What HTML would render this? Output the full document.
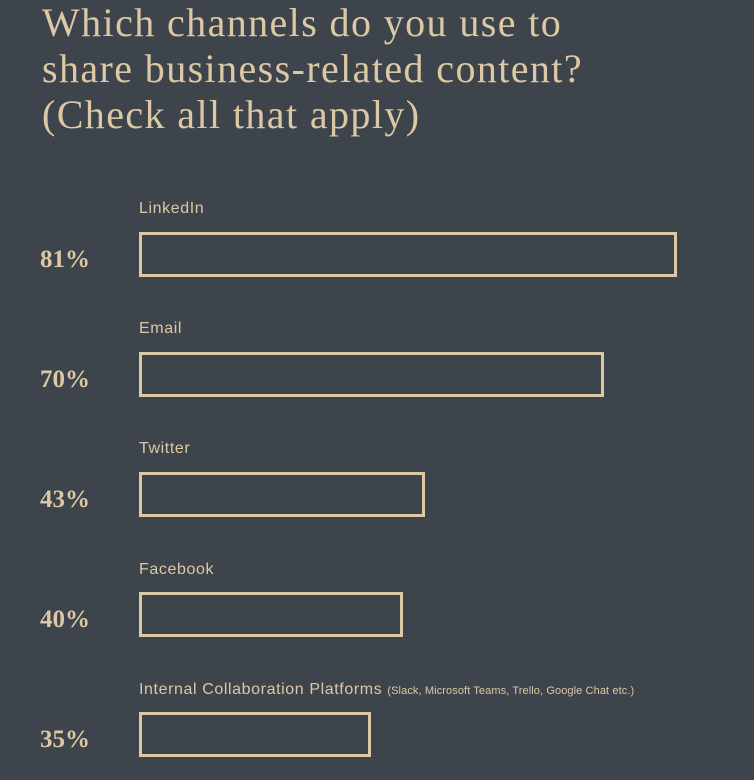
<!DOCTYPE html>
<html><head><style>
body{margin:0;width:754px;height:780px;background:#3e444b;overflow:hidden;position:relative;color:#dcc8a4}
h1{position:absolute;left:42px;top:0px;margin:0;font:400 40px/46px "Liberation Serif",serif;letter-spacing:1.4px}
.l{position:absolute;left:139px;font:16px "Liberation Sans",sans-serif;letter-spacing:0.6px}
.l small{font-size:11px;letter-spacing:0.1px}
.p{position:absolute;left:40px;font:700 25px "Liberation Serif",serif;}
.b{position:absolute;left:139px;height:39px;border:3px solid #dcc8a4;box-sizing:content-box}
</style></head><body>
<h1>Which channels do you use to<br>share business-related content?<br>(Check all that apply)</h1>
<div class="l" style="top:200px">LinkedIn</div>
<div class="p" style="top:246px">81%</div>
<div class="b" style="top:232px;width:532px"></div>
<div class="l" style="top:320px">Email</div>
<div class="p" style="top:366px">70%</div>
<div class="b" style="top:352px;width:459px"></div>
<div class="l" style="top:440px">Twitter</div>
<div class="p" style="top:486px">43%</div>
<div class="b" style="top:472px;width:280px"></div>
<div class="l" style="top:561px">Facebook</div>
<div class="p" style="top:606px">40%</div>
<div class="b" style="top:592px;width:258px"></div>
<div class="l" style="top:681px">Internal Collaboration Platforms <small>(Slack, Microsoft Teams, Trello, Google Chat etc.)</small></div>
<div class="p" style="top:726px">35%</div>
<div class="b" style="top:712px;width:226px"></div>
</body></html>
